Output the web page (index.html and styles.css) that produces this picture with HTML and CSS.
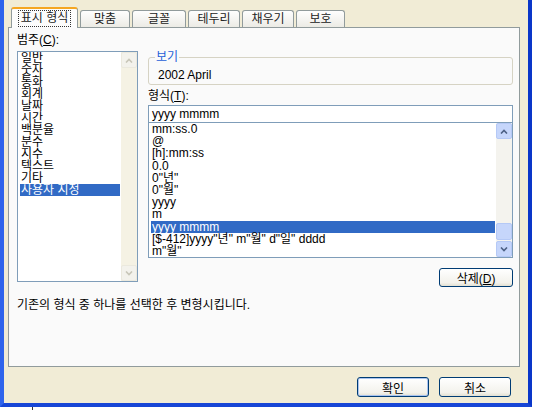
FILE: index.html
```html
<!DOCTYPE html>
<html lang="ko">
  <head>
    <meta charset="UTF-8" />
    <title>셀 서식</title>
    <link rel="stylesheet" href="styles.css">
  </head>
  <body>
    <div class="dialog">
      <!-- Tabs -->
      <div class="tabs">
        <div class="tab active w-67"><span class="focus">표시 형식</span></div>
        <div class="tab w-50">맞춤</div>
        <div class="tab w-54">글꼴</div>
        <div class="tab w-52">테두리</div>
        <div class="tab w-52">채우기</div>
        <div class="tab w-49">보호</div>
      </div>

      <div class="panel">
        <div class="columns">
          <!-- Category -->
          <div class="col-left">
            <div class="label">범주(<u>C</u>):</div>
            <div class="listbox cat">
              <ul class="items">
                <li>일반</li>
                <li>숫자</li>
                <li>통화</li>
                <li>회계</li>
                <li>날짜</li>
                <li>시간</li>
                <li>백분율</li>
                <li>분수</li>
                <li>지수</li>
                <li>텍스트</li>
                <li>기타</li>
                <li class="sel">사용자 지정</li>
              </ul>
              <div class="scrollbar off">
                <div class="sb-btn">
                  <svg width="8" height="5" viewBox="0 0 8 5"><path d="M1 4.5 L4 1.5 L7 4.5" /></svg>
                </div>
                <div class="track"></div>
                <div class="sb-btn">
                  <svg width="8" height="5" viewBox="0 0 8 5"><path d="M1 0.5 L4 3.5 L7 0.5" /></svg>
                </div>
              </div>
            </div>
          </div>

          <!-- Sample + format -->
          <div class="col-right">
            <fieldset class="sample">
              <legend>보기</legend>
              <div class="sample-value">2002 April</div>
            </fieldset>

            <div class="label label-fmt">형식(<u>T</u>):</div>
            <div class="input">yyyy mmmm</div>

            <div class="listbox fmt">
              <ul class="items">
                <li>mm:ss.0</li>
                <li>@</li>
                <li>[h]:mm:ss</li>
                <li>0.0</li>
                <li>0"년"</li>
                <li>0"월"</li>
                <li>yyyy</li>
                <li>m</li>
                <li class="sel">yyyy mmmm</li>
                <li>[$-412]yyyy"년" m"월" d"일" dddd</li>
                <li>m"월"</li>
              </ul>
              <div class="scrollbar">
                <div class="sb-btn">
                  <svg width="8" height="5" viewBox="0 0 8 5"><path d="M1 4.5 L4 1.5 L7 4.5" /></svg>
                </div>
                <div class="track">
                  <div class="thumb"></div>
                </div>
                <div class="sb-btn">
                  <svg width="8" height="5" viewBox="0 0 8 5"><path d="M1 0.5 L4 3.5 L7 0.5" /></svg>
                </div>
              </div>
            </div>

            <div class="row-right">
              <button class="btn btn-delete">삭제(<u>D</u>)</button>
            </div>
          </div>
        </div>

        <p class="desc">기존의 형식 중 하나를 선택한 후 변형시킵니다.</p>
      </div>

      <!-- OK / Cancel -->
      <div class="footer">
        <button class="btn btn-ok">확인</button>
        <button class="btn">취소</button>
      </div>
    </div>
    <div class="tick"></div>
  </body>
</html>
```

FILE: styles.css
```css
* {
  box-sizing: border-box;
}
body {
  margin: 0;
  background-color: #fff;
  font-family: "Liberation Sans", "Noto Sans CJK KR", sans-serif;
  font-size: 12px;
  color: #000;
}
u {
  text-decoration: underline;
}
.dialog {
  width: 532px;
  height: 407px;
  padding: 7px 8px 0 4px;
  background-color: #f1ecd6;
  border-left: 4px solid #2f64ec;
  border-right: 4px solid #0a36c9;
  border-bottom: 4px solid #1746d6;
}
.tick {
  width: 1px;
  height: 3px;
  margin-left: 32px;
  background-color: #333;
}

/* tabs */
.tabs {
  display: flex;
  align-items: flex-end;
  gap: 2px;
  height: 20px;
  padding-left: 3px;
}
.tab {
  height: 17px;
  line-height: 16px;
  text-align: center;
  border: 1px solid #919b9c;
  border-bottom: none;
  border-radius: 3px 3px 0 0;
  background: linear-gradient(#fefefe, #ecebe5);
  color: #222;
}
.tab.active {
  position: relative;
  z-index: 1;
  height: 21px;
  margin-bottom: -1px;
  padding-top: 2px;
  line-height: 15px;
  border-top: 2px solid #f5a623;
  background: #fcfcfc;
}
.focus {
  display: inline-block;
  padding: 0 2px;
  outline: 1px dotted #333;
}
.w-67 { width: 67px; }
.w-50 { width: 50px; }
.w-54 { width: 54px; }
.w-52 { width: 52px; }
.w-49 { width: 49px; }

/* panel */
.panel {
  height: 340px;
  padding: 5px 6px 0 8px;
  border: 1px solid #919b9c;
  background-color: #fafafa;
}
.columns {
  display: flex;
  gap: 10px;
}
.col-left {
  width: 121px;
}
.col-right {
  width: 365px;
  padding-top: 17px;
}
.label {
  height: 14px;
  line-height: 14px;
  margin-bottom: 4px;
}
.label-fmt {
  margin: 4px 0 2px;
}

/* list boxes */
.listbox {
  display: flex;
  border: 1px solid #7f9db9;
  background-color: #fff;
}
.listbox.cat {
  height: 231px;
}
.listbox.fmt {
  height: 136px;
  margin-top: -1px;
}
.items {
  flex: 1;
  list-style: none;
  margin: 0;
  padding: 0 1px 0 2px;
  overflow: hidden;
}
.items li {
  height: 12px;
  line-height: 12px;
  padding-left: 1px;
  white-space: nowrap;
}
.items li.sel {
  background-color: #316ac5;
  color: #fff;
}
.fmt .items li {
  height: 12.2px;
}

/* scrollbars */
.scrollbar {
  display: flex;
  flex-direction: column;
  width: 16px;
  background-color: #f4f3ee;
}
.sb-btn {
  display: flex;
  align-items: center;
  justify-content: center;
  height: 16px;
  border: 1px solid #b5c9f6;
  border-radius: 2px;
  background-color: #c6d6fb;
}
.sb-btn path {
  fill: none;
  stroke: #4d6185;
  stroke-width: 1.6;
}
.track {
  flex: 1;
  display: flex;
  flex-direction: column;
}
.thumb {
  height: 17px;
  margin: auto 0 1px;
  border: 1px solid #b5c9f6;
  border-radius: 2px;
  background-color: #c6d6fb;
}
.scrollbar.off {
  background-color: #f5f2e4;
}
.scrollbar.off .sb-btn {
  border-color: #ebe9de;
  background-color: #f3f2ec;
}
.scrollbar.off path {
  stroke: #c8c6b8;
}

/* sample group */
.sample {
  margin: 0;
  padding: 0 0 2px 6px;
  min-width: 0;
  border: 1px solid #d6d3c4;
  border-radius: 3px;
}
.sample legend {
  padding: 0 1px;
  line-height: 14px;
  color: #1e5fd8;
}
.sample-value {
  padding: 4px 0 0 3px;
  line-height: 14px;
}
.input {
  height: 18px;
  line-height: 16px;
  padding-left: 3px;
  border: 1px solid #7f9db9;
  background-color: #fff;
  position: relative;
  z-index: 1;
}

/* buttons */
.row-right {
  display: flex;
  justify-content: flex-end;
  margin-top: 10px;
}
.btn {
  height: 20px;
  width: 72px;
  padding: 0;
  font-family: "Liberation Sans", "Noto Sans CJK KR", sans-serif;
  font-size: 12px;
  color: #000;
  border: 1px solid #003c74;
  border-radius: 3px;
  background: linear-gradient(#fff, #f3f2ec 80%, #e3e0d2);
}
.btn-delete {
  width: 74px;
  height: 19px;
}
.btn-ok {
  box-shadow: inset 0 0 0 1px #a9c3ef;
}
.desc {
  margin: 11px 0 0;
  line-height: 14px;
}
.footer {
  display: flex;
  justify-content: flex-end;
  gap: 10px;
  margin: 10px 9px 0 0;
}
```
